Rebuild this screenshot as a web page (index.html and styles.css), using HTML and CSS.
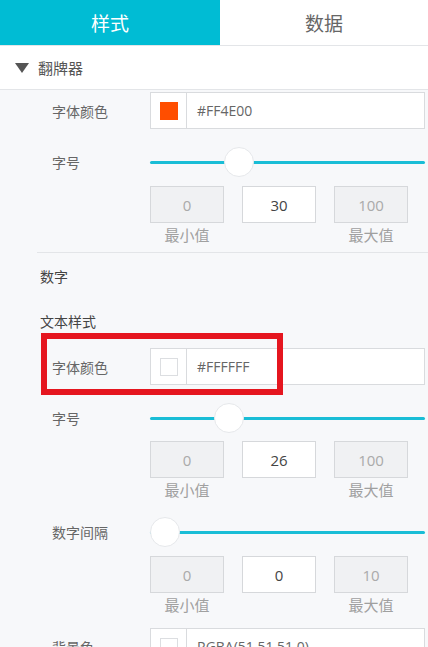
FILE: index.html
```html
<!DOCTYPE html>
<html lang="zh-CN">

<head>
    <meta charset="UTF-8">
    <meta name="viewport" content="width=device-width, initial-scale=1.0">
    <title>翻牌器 样式</title>
    <link rel="stylesheet" href="styles.css">
</head>

<body>
    <div class="tabs">
        <div class="tab active">样式</div>
        <div class="tab">数据</div>
    </div>

    <div class="section-head"><span class="caret"></span>翻牌器</div>

    <div class="panel">
        <div class="row field-row first">
            <span class="label">字体颜色</span>
            <div class="color-input">
                <span class="swatch-cell"><span class="swatch" style="background: #FF4E00"></span></span>
                <span class="color-text">#FF4E00</span>
            </div>
        </div>
        <div class="row slider-row">
            <span class="label">字号</span>
            <div class="slider">
                <div class="track"></div>
                <div class="thumb" style="--p: 0.3"></div>
            </div>
        </div>
        <div class="range">
            <div class="num disabled">0</div>
            <div class="num">30</div>
            <div class="num disabled">100</div>
        </div>
        <div class="range-labels">
            <span>最小值</span><span></span><span>最大值</span>
        </div>

        <div class="divider"></div>

        <div class="heading">数字</div>
        <div class="heading">文本样式</div>

        <div class="row field-row second">
            <span class="label">字体颜色</span>
            <div class="color-input">
                <span class="swatch-cell"><span class="swatch light" style="background: #FFFFFF"></span></span>
                <span class="color-text">#FFFFFF</span>
            </div>
            <div class="highlight"></div>
        </div>
        <div class="row slider-row">
            <span class="label">字号</span>
            <div class="slider">
                <div class="track"></div>
                <div class="thumb" style="--p: 0.26"></div>
            </div>
        </div>
        <div class="range tight">
            <div class="num disabled">0</div>
            <div class="num">26</div>
            <div class="num disabled">100</div>
        </div>
        <div class="range-labels">
            <span>最小值</span><span></span><span>最大值</span>
        </div>

        <div class="row slider-row spaced">
            <span class="label">数字间隔</span>
            <div class="slider">
                <div class="track"></div>
                <div class="thumb" style="--p: 0"></div>
            </div>
        </div>
        <div class="range">
            <div class="num disabled">0</div>
            <div class="num">0</div>
            <div class="num disabled">10</div>
        </div>
        <div class="range-labels">
            <span>最小值</span><span></span><span>最大值</span>
        </div>

        <div class="row field-row last">
            <span class="label">背景色</span>
            <div class="color-input">
                <span class="swatch-cell"><span class="swatch light" style="background: #FFFFFF"></span></span>
                <span class="color-text">RGBA(51,51,51,0)</span>
            </div>
        </div>
    </div>
</body>

</html>
```

FILE: styles.css
```css
body {
    margin: 0;
    padding: 0;
    font-family: "Open Sans", "Noto Sans CJK SC", sans-serif;
    background-color: #f7f8fa;
    color: #333;
    overflow: hidden;
}

.tabs {
    display: flex;
    height: 45px;
    background: #fff;
    border-bottom: 1px solid #e3e5e8;
}

.tab {
    flex: 1;
    display: flex;
    align-items: center;
    justify-content: center;
    font-size: 19px;
    color: #666;
}

.tab.active {
    flex: none;
    width: 220px;
    background-color: #00bcd4;
    color: #fff;
}

.section-head {
    height: 43px;
    display: flex;
    align-items: center;
    padding-left: 15px;
    background: #fff;
    border-bottom: 1px solid #e3e5e8;
    font-size: 15px;
    color: #555;
}

.caret {
    width: 0;
    height: 0;
    border-left: 7px solid transparent;
    border-right: 7px solid transparent;
    border-top: 10px solid #555;
    margin-right: 9px;
}

.row {
    position: relative;
    display: flex;
    align-items: center;
    padding: 0 3px 0 52px;
}

.label {
    flex: none;
    width: 98px;
    font-size: 14px;
    color: #666;
}

.field-row.first {
    margin-top: 2px;
}

.field-row.second {
    margin-top: 5px;
}

.field-row.last {
    margin-top: 15px;
}

.color-input {
    flex: 1;
    height: 35px;
    display: flex;
    align-items: center;
    background: #fff;
    border: 1px solid #d9dbde;
}

.swatch-cell {
    width: 35px;
    height: 100%;
    display: flex;
    align-items: center;
    justify-content: center;
    border-right: 1px solid #d9dbde;
}

.swatch {
    width: 18px;
    height: 18px;
    box-sizing: border-box;
}

.swatch.light {
    border: 1px solid #dcdee1;
}

.color-text {
    padding-left: 10px;
    font-size: 14px;
    color: #666;
}

.highlight {
    position: absolute;
    left: 41px;
    top: -15px;
    width: 242px;
    height: 62px;
    box-sizing: border-box;
    border: 6px solid #e5161f;
}

.slider-row {
    height: 30px;
    margin-top: 18px;
}

.slider-row.spaced {
    margin-top: 19px;
}

.slider {
    position: relative;
    flex: 1;
    height: 30px;
    display: flex;
    align-items: center;
}

.track {
    width: 100%;
    height: 3px;
    border-radius: 2px;
    background: #19bdd6;
}

.thumb {
    position: absolute;
    top: 0;
    left: calc(var(--p) * (100% - 30px));
    width: 30px;
    height: 30px;
    box-sizing: border-box;
    border-radius: 50%;
    background: #fff;
    border: 1px solid #e6e8eb;
}

.range {
    display: flex;
    gap: 18px;
    margin-top: 9px;
    padding-left: 150px;
}

.range.tight {
    margin-top: 8px;
}

.num {
    width: 72px;
    height: 35px;
    display: flex;
    align-items: center;
    justify-content: center;
    background: #fff;
    border: 1px solid #d6d8db;
    font-size: 15px;
    color: #444;
}

.num.disabled {
    background: #f0f1f3;
    color: #aaa;
}

.range-labels {
    display: grid;
    grid-template-columns: 74px 74px 74px;
    column-gap: 18px;
    margin-top: 4px;
    padding-left: 150px;
    font-size: 15px;
    line-height: 16px;
    color: #a0a0a0;
    text-align: center;
}

.divider {
    margin: 9px 0 0 37px;
    border-top: 1px solid #e3e5e8;
}

.heading {
    height: 45px;
    display: flex;
    align-items: center;
    padding-left: 40px;
    font-size: 14px;
    color: #444;
}
```
